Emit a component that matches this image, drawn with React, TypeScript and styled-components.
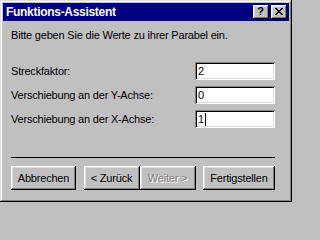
import { FC } from 'react';
import styled, { createGlobalStyle } from 'styled-components';

const GlobalStyle = createGlobalStyle`
  * {
    box-sizing: border-box;
  }

  body {
    margin: 0;
    background: #c0c0c0;
    font-family: 'Liberation Sans', Arial, sans-serif;
  }
`;

const raised = `
  box-shadow: inset -1px -1px #000, inset 1px 1px #fff, inset -2px -2px #808080,
    inset 2px 2px #dfdfdf;
`;

const closePixels = [
  [0, 0], [1, 0], [6, 0], [7, 0],
  [1, 1], [2, 1], [5, 1], [6, 1],
  [2, 2], [3, 2], [4, 2], [5, 2],
  [3, 3], [4, 3],
  [2, 4], [3, 4], [4, 4], [5, 4],
  [1, 5], [2, 5], [5, 5], [6, 5],
  [0, 6], [1, 6], [6, 6], [7, 6],
];

const CloseGlyph: FC = () => (
  <svg width="8" height="7" viewBox="0 0 8 7" shapeRendering="crispEdges">
    {closePixels.map(([x, y]) => (
      <rect key={`${x}-${y}`} x={x} y={y} width="1" height="1" fill="#000" />
    ))}
  </svg>
);

const fields = [
  { label: 'Streckfaktor:', value: '2' },
  { label: 'Verschiebung an der Y-Achse:', value: '0' },
  { label: 'Verschiebung an der X-Achse:', value: '1', focused: true },
];

const App: FC = () => {
  return (
    <>
      <GlobalStyle />
      <Window>
        <TitleBar>
          <Title>Funktions-Assistent</Title>
          <TitleButtons>
            <TitleButton>?</TitleButton>
            <TitleButton>
              <CloseGlyph />
            </TitleButton>
          </TitleButtons>
        </TitleBar>
        <Content>
          <Intro>Bitte geben Sie die Werte zu ihrer Parabel ein.</Intro>
          <Form>
            {fields.map((f) => (
              <Row key={f.label}>
                <Label>{f.label}</Label>
                <Field>
                  {f.value}
                  {f.focused && <Caret />}
                </Field>
              </Row>
            ))}
          </Form>
          <Separator />
          <ButtonBar>
            <Button $width={65}>Abbrechen</Button>
            <NavGroup>
              <Button $width={56}>&lt; Zurück</Button>
              <Button $width={56} disabled>
                Weiter &gt;
              </Button>
            </NavGroup>
            <Button $width={72}>Fertigstellen</Button>
          </ButtonBar>
        </Content>
      </Window>
    </>
  );
};

const Window = styled.div`
  width: 292px;
  height: 202px;
  padding: 3px;
  display: flex;
  flex-direction: column;
  background: #c0c0c0;
  box-shadow: inset -1px -1px #000, inset 1px 1px #dfdfdf, inset -2px -2px #808080,
    inset 2px 2px #fff;
`;

const TitleBar = styled.div`
  height: 18px;
  background: #000080;
  display: flex;
  align-items: center;
  justify-content: space-between;
  padding: 0 2px 0 3px;
`;

const Title = styled.span`
  color: #fff;
  font-weight: bold;
  font-size: 12px;
  letter-spacing: -0.3px;
  line-height: 14px;
`;

const TitleButtons = styled.div`
  display: flex;
  gap: 2px;
`;

const TitleButton = styled.div`
  width: 16px;
  height: 14px;
  background: #c0c0c0;
  ${raised}
  display: flex;
  align-items: center;
  justify-content: center;
  padding: 0 1px 1px 0;
  font-size: 11px;
  font-weight: bold;
  line-height: 11px;
  color: #000;
`;

const Content = styled.div`
  flex: 1;
  display: flex;
  flex-direction: column;
  padding: 8px 14px 0 8px;
  font-size: 11px;
  letter-spacing: -0.2px;
  color: #000;
`;

const Intro = styled.p`
  margin: 0;
  line-height: 13px;
`;

const Form = styled.div`
  margin-top: 20px;
  display: flex;
  flex-direction: column;
  gap: 6px;
`;

const Row = styled.div`
  display: flex;
  align-items: center;
  justify-content: space-between;
`;

const Label = styled.span`
  line-height: 13px;
`;

const Field = styled.div`
  width: 80px;
  height: 18px;
  background: #fff;
  box-shadow: inset 1px 1px #808080, inset -1px -1px #fff, inset 2px 2px #000,
    inset -2px -2px #dfdfdf;
  padding: 0 3px;
  display: flex;
  align-items: center;
  line-height: 13px;
`;

const Caret = styled.span`
  width: 1px;
  height: 13px;
  margin-left: 1px;
  background: #000;
`;

const Separator = styled.div`
  margin-top: 29px;
  height: 1px;
  background: #000;
`;

const ButtonBar = styled.div`
  margin-top: 8px;
  display: flex;
  justify-content: space-between;
`;

const NavGroup = styled.div`
  display: flex;
`;

const Button = styled.button<{ $width: number }>`
  width: ${(p) => p.$width}px;
  height: 24px;
  padding: 0;
  border: none;
  background: #c0c0c0;
  ${raised}
  font-family: 'Liberation Sans', Arial, sans-serif;
  font-size: 11px;
  letter-spacing: -0.2px;
  color: #000;

  &:disabled {
    color: #808080;
    text-shadow: 1px 1px #fff;
  }
`;

export default App;
